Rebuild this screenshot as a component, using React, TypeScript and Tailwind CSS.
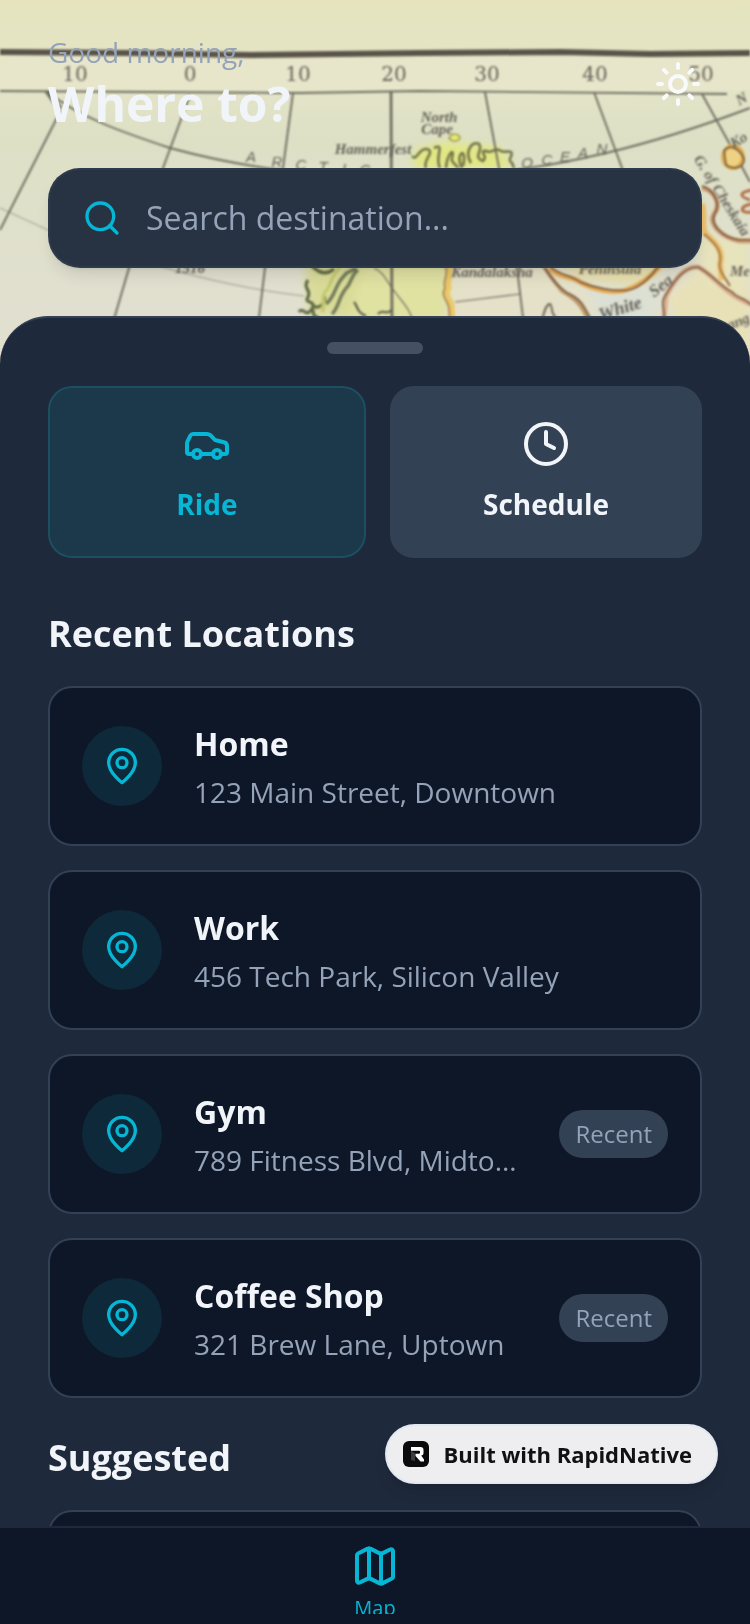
import type { ReactNode } from "react";
import { Car, Clock, Search, Sun } from "lucide-react";

type Place = {
  name: string;
  address: string;
  recent?: boolean;
};

const recentLocations: Place[] = [
  { name: "Home", address: "123 Main Street, Downtown" },
  { name: "Work", address: "456 Tech Park, Silicon Valley" },
  { name: "Gym", address: "789 Fitness Blvd, Midtown", recent: true },
  { name: "Coffee Shop", address: "321 Brew Lane, Uptown", recent: true },
];

const longitudes = [
  { label: "10", x: 75 },
  { label: "0", x: 190 },
  { label: "10", x: 298 },
  { label: "20", x: 394 },
  { label: "30", x: 487 },
  { label: "40", x: 595 },
  { label: "50", x: 701 },
];

function VintageMap() {
  return (
    <svg
      className="absolute inset-x-0 top-0 h-[400px] w-full"
      viewBox="0 0 750 400"
      preserveAspectRatio="xMidYMin slice"
      aria-hidden="true"
    >
      <defs>
        <linearGradient id="paper" x1="0" y1="0" x2="0" y2="1">
          <stop offset="0" stopColor="#e5e4bf" />
          <stop offset="0.2" stopColor="#e4e4c8" />
          <stop offset="0.35" stopColor="#dde0c5" />
          <stop offset="0.7" stopColor="#e1e0d0" />
          <stop offset="1" stopColor="#e1dfcc" />
        </linearGradient>
        <filter id="soften" x="-5%" y="-5%" width="110%" height="110%">
          <feGaussianBlur stdDeviation="0.8" />
        </filter>
        <filter id="wash" x="-20%" y="-20%" width="140%" height="140%">
          <feGaussianBlur stdDeviation="4" />
        </filter>
      </defs>

      <rect width="750" height="400" fill="url(#paper)" />
      <rect y="57" width="750" height="33" fill="#e7e5ca" />

      {/* land tints */}
      <g filter="url(#wash)">
        <path d="M344 262h106l-4 60H338z" fill="#e0e2a2" />
        <path d="M414 150l28-8 58 5 12 22H414z" fill="#e2e784" />
        <path d="M305 266l60-4-15 54h-40z" fill="#d9dc98" />
        <path d="M452 262l95 0 38 30 12 30H452z" fill="#e5e1c8" />
        <path d="M555 255l112 8-32 26-60-12z" fill="#e9e0ad" />
        <path d="M666 300l35-34 49 30v80l-60-30z" fill="#e8e1b8" />
        <path d="M690 240l60-4v60l-40-14z" fill="#e7e3bd" />
        <path d="M590 285l70 0-10 35h-50z" fill="#dce0d4" />
      </g>

      <g filter="url(#soften)" fill="none" stroke="#6f6d61" strokeWidth="1.9">
        <path d="M0 52L130 53L250 55L420 53L560 52L650 54L750 53" stroke="#5a5349" strokeWidth="6" />
        <path d="M0 91L300 93L420 91L727 94" />
        <path d="M45 91L60 112L0 230M48 93L62 108" />
        <path d="M190 95L163 168L129 268L112 326" />
        <path d="M293 93L283 168L265 268L258 326" />
        <path d="M391 91L392 326" strokeWidth="2.8" />
        <path d="M485 92L499 168L517 268L524 326" />
        <path d="M594 92L622 168L650 250" />
        <path d="M702 94L733 150L750 182" />
        <path d="M46 91C80 118 125 133 170 148C280 178 380 180 460 176C560 168 650 146 750 108" />
        <path d="M0 208L48 230C120 254 200 284 304 296" strokeWidth="1" opacity="0.6" />
        <path d="M374 268C384 272 388 284 395 292C402 302 408 306 412 318M455 302L520 294" strokeWidth="1.2" />

        {/* northern coast */}
        <path
          d="M412 156C417 162 418 148 427 149C436 152 422 160 426 168M434 148C446 142 434 158 440 168M446 168C447 154 455 146 452 158C450 162 456 164 458 168M462 168C454 154 468 144 463 166M471 163C464 152 472 140 479 144C484 150 472 157 483 161C489 157 478 150 486 151C492 154 494 148 499 150C504 154 508 150 511 152C514 156 506 160 512 163L514 168"
          stroke="#73754a"
          strokeWidth="2.6"
        />
        <path d="M449 138C452 132 459 134 460 138C458 142 452 142 449 138z" stroke="#9a9c44" strokeWidth="1.6" fill="#e6e878" />

        {/* fjords */}
        <path
          d="M312 266C318 272 326 276 334 269M308 280C302 288 312 290 308 297C304 304 314 300 313 306C320 310 326 302 324 296M299 312C303 306 306 318 311 310C314 304 312 322 318 316"
          stroke="#626b45"
          strokeWidth="3.2"
        />
        <path d="M326 304C336 296 334 286 344 276C348 270 352 272 356 268M332 314C340 306 338 296 348 286C352 280 352 274 358 270" stroke="#737a58" strokeWidth="3.4" />
        <path d="M340 268C330 276 332 286 325 292C320 298 326 306 322 312" stroke="#c4c96f" strokeWidth="3.5" />
        <path d="M354 302C358 306 356 312 366 316M378 314c4-6 8 2 14-4" stroke="#5b5b48" strokeWidth="2.2" />

        {/* baltic border and white sea shore */}
        <path d="M447 266C453 274 445 280 448 288C442 296 452 300 451 308L452 320" stroke="#ecc869" strokeWidth="7" />
        <path d="M445 266C450 274 442 280 445 288C440 296 448 300 449 308L450 320" stroke="#a88a5c" />
        <path d="M550 268C558 278 572 276 580 282C594 290 614 294 626 290C638 286 650 278 660 266" stroke="#e8ad55" strokeWidth="5" />
        <path d="M542 264C550 276 556 284 562 291C574 298 582 304 588 320" stroke="#bd9c6b" strokeWidth="4" />
        <path
          d="M545 268C552 280 560 288 567 293C580 298 584 306 590 318M550 266C558 276 570 274 580 282C594 288 614 292 628 290C640 288 652 276 660 264"
          stroke="#7b5a45"
          strokeWidth="2"
        />
        <path d="M542 320C544 312 546 304 550 304C553 306 550 312 556 318" stroke="#6b6452" />

        {/* eastern shore */}
        <path d="M702 188C714 190 722 204 714 214C708 224 722 238 740 241h14" stroke="#cfa277" strokeWidth="5" />
        <path d="M702 186C714 190 721 204 715 213C709 224 722 238 740 240h14" stroke="#7b5a47" strokeWidth="2.2" />
        <path d="M702 204C706 216 700 226 706 234C716 244 724 250 720 264L722 280" stroke="#ecc06a" strokeWidth="6" />
        <path d="M704 234C714 242 722 250 720 262C718 270 724 276 730 286" stroke="#99704a" strokeWidth="2" />
        <path d="M664 318l2-22C676 278 684 266 698 267C712 274 722 290 738 298l12 6" stroke="#dbb08e" strokeWidth="5" />
        <path d="M662 326C668 314 660 306 664 298C674 280 684 267 698 267C712 274 722 288 732 292C738 300 744 296 752 306" stroke="#7f6049" strokeWidth="2" />
        <ellipse cx="733" cy="157" rx="10" ry="11" fill="#eed282" stroke="#dfae52" strokeWidth="4" />
        <path d="M724 151c6-8 16-2 20 8c0 8-10 12-18 6z" stroke="#7b5c3e" strokeWidth="2" />
        <path d="M752 190C740 192 738 196 750 200M752 204C738 206 740 214 752 212" stroke="#b0714a" strokeWidth="3" />
      </g>

      <g
        filter="url(#soften)"
        fill="#66635a"
        fontFamily="'Liberation Serif', serif"
        fontSize="15"
        textAnchor="middle"
      >
        <g fontFamily="'DejaVu Serif', serif" fontSize="20">
          {longitudes.map((item) => (
            <text key={item.x} x={item.x} y="81">
              {item.label}
            </text>
          ))}
        </g>
        <g fontFamily="'Liberation Sans', sans-serif" fontStyle="italic" fontSize="15">
          <text x="251" y="162">A</text>
          <text x="277" y="167">R</text>
          <text x="301" y="170">C</text>
          <text x="323" y="172">T</text>
          <text x="344" y="174">I</text>
          <text x="365" y="175">C</text>
          <text x="527" y="168">O</text>
          <text x="547" y="165">C</text>
          <text x="565" y="162">E</text>
          <text x="583" y="158">A</text>
          <text x="602" y="154">N</text>
        </g>
        <g fontStyle="italic" fontWeight="bold">
          <text x="439" y="122">North</text>
          <text x="437" y="134">Cape</text>
          <text x="373" y="154">Hammerfest</text>
          <text x="492" y="277">Kandalaksha</text>
          <text x="610" y="274">Peninsula</text>
          <text x="190" y="273">1516</text>
          <text x="622" y="314" fontSize="18" transform="rotate(-18 622 314)">White</text>
          <text x="664" y="290" fontSize="17" transform="rotate(-38 664 290)">Sea</text>
          <text x="718" y="198" fontSize="15" transform="rotate(58 718 198)">G. of Cheskaia</text>
          <text x="741" y="144" transform="rotate(-30 741 144)">Ko</text>
          <text x="744" y="103" transform="rotate(-30 744 103)">N</text>
          <text x="740" y="276">Me</text>
          <text x="740" y="326" transform="rotate(-22 740 326)">ang</text>
        </g>
      </g>
    </svg>
  );
}

function PinIcon() {
  return (
    <svg
      width="40"
      height="40"
      viewBox="0 0 24 24"
      fill="none"
      stroke="currentColor"
      strokeWidth="2"
      strokeLinecap="round"
      strokeLinejoin="round"
      aria-hidden="true"
    >
      <path d="M20 10c0 6-8 12-8 12s-8-6-8-12a8 8 0 0 1 16 0Z" />
      <circle cx="12" cy="10" r="3" />
    </svg>
  );
}

function MapIcon() {
  return (
    <svg
      className="shrink-0"
      width="48"
      height="48"
      viewBox="0 0 24 24"
      fill="none"
      stroke="currentColor"
      strokeWidth="2"
      strokeLinecap="round"
      strokeLinejoin="round"
      aria-hidden="true"
    >
      <path d="M14.106 5.553a2 2 0 0 0 1.788 0l3.659-1.83A1 1 0 0 1 21 4.619v12.764a1 1 0 0 1-.553.894l-4.553 2.277a2 2 0 0 1-1.788 0l-4.212-2.106a2 2 0 0 0-1.788 0l-3.659 1.83A1 1 0 0 1 3 19.381V6.618a1 1 0 0 1 .553-.894l4.553-2.277a2 2 0 0 1 1.788 0z" />
      <path d="M15 5.764v15" />
      <path d="M9 3.236v15" />
    </svg>
  );
}

function SectionTitle({ children }: { children: ReactNode }) {
  return <h2 className="mb-6 text-[36px] leading-14 font-bold text-[#f1f5f9]">{children}</h2>;
}

function PlaceCard({ place }: { place: Place }) {
  return (
    <button
      type="button"
      className="flex w-full items-center rounded-3xl border-2 border-[#334155] bg-[#0e1728] p-8 text-left"
    >
      <span className="mr-8 flex size-20 shrink-0 items-center justify-center rounded-full bg-[#0d293a] text-[#06b6d4]">
        <PinIcon />
      </span>
      <span className="min-w-0 flex-1">
        <span className="block truncate text-[32px] leading-12 font-bold text-[#f1f5f9]">
          {place.name}
        </span>
        <span className="mt-1 block truncate text-[28px] leading-10 text-[#94a3b8]">
          {place.address}
        </span>
      </span>
      {place.recent && (
        <span className="ml-8 rounded-full bg-[#334155] px-4 py-2 text-2xl text-[#94a3b8]">
          Recent
        </span>
      )}
    </button>
  );
}

export default function App() {
  return (
    <div className="relative flex h-screen flex-col overflow-hidden bg-[#0e1728] font-['Open_Sans',sans-serif]">
      <VintageMap />

      <header className="relative shrink-0 px-12 pt-8 pb-12">
        <div className="flex items-center justify-between">
          <div>
            <p className="text-[28px] leading-10 text-[#94a3b8]">Good morning,</p>
            <h1 className="text-5xl leading-16 font-bold text-[#f1f5f9]">Where to?</h1>
          </div>
          <button type="button" aria-label="Toggle theme" className="text-slate-50">
            <Sun size={48} />
          </button>
        </div>

        <label className="mt-8 flex h-[100px] items-center gap-6 rounded-[32px] border-2 border-[#334155]/60 bg-[#273243] px-8 shadow-lg">
          <Search size={40} className="shrink-0 text-[#06b6d4]" />
          <input
            type="text"
            aria-label="Search destination"
            placeholder="Search destination..."
            className="min-w-0 flex-1 bg-transparent text-[32px] text-[#f1f5f9] outline-none placeholder:text-[#94a3b8]"
          />
        </label>
      </header>

      <main className="relative min-h-0 flex-1 overflow-hidden rounded-t-[48px] border-t-2 border-[#334155] bg-[#1e293b] px-12 pt-6">
        <div className="mx-auto h-3 w-24 rounded-full bg-[#455062]" />

        <div className="mt-8 grid grid-cols-[53fr_52fr] gap-6">
          <button
            type="button"
            className="flex flex-col items-center gap-4 rounded-3xl border-2 border-[#1c4f60] bg-[#1c384b] p-8 text-[28px] leading-10 font-bold text-[#06b6d4]"
          >
            <Car size={48} />
            Ride
          </button>
          <button
            type="button"
            className="flex flex-col items-center gap-4 rounded-3xl border-2 border-[#334155] bg-[#334155] p-8 text-[28px] leading-10 font-bold text-[#f1f5f9]"
          >
            <Clock size={48} />
            Schedule
          </button>
        </div>

        <section className="mt-12">
          <SectionTitle>Recent Locations</SectionTitle>
          <div className="flex flex-col gap-6">
            {recentLocations.map((place) => (
              <PlaceCard key={place.name} place={place} />
            ))}
          </div>
        </section>

        <section className="mt-8">
          <SectionTitle>Suggested</SectionTitle>
          <div className="h-40 rounded-3xl border-2 border-[#334155] bg-[#0e1728]" />
        </section>
      </main>

      <nav className="relative h-[98px] shrink-0 border-t-2 border-[#1e293b] bg-[#0e1728] pt-[14px] pb-[10px]">
        <a
          href="#map"
          className="flex h-full flex-col items-center gap-1 overflow-hidden text-xl leading-7 text-[#06b6d4]"
        >
          <MapIcon />
          Map
        </a>
      </nav>

      <a
        href="#rapidnative"
        className="absolute right-8 bottom-[140px] flex h-[60px] items-center gap-3.5 rounded-full border-2 border-[#e2e8f0] bg-[#eeeef1] pr-6 pl-4 text-[22px] font-bold text-[#111111] shadow-lg"
      >
        <svg width="26" height="26" viewBox="0 0 26 26" aria-hidden="true">
          <rect width="26" height="26" rx="6" fill="#0a0a0a" />
          <path d="M8 10l4 2v8l-4-1z" fill="#3d3d3d" />
          <path
            d="M8 6h9.5c2 0 3 1.2 3 3v3c0 1.5-.8 2.3-2.3 2.6L21 18.5v2h-3.5l-5-5.5v-2.3h3.5c.7 0 1-.3 1-.9v-1.3c0-.5-.3-.8-.8-.8H8z"
            fill="#ffffff"
          />
        </svg>
        Built with RapidNative
      </a>
    </div>
  );
}
